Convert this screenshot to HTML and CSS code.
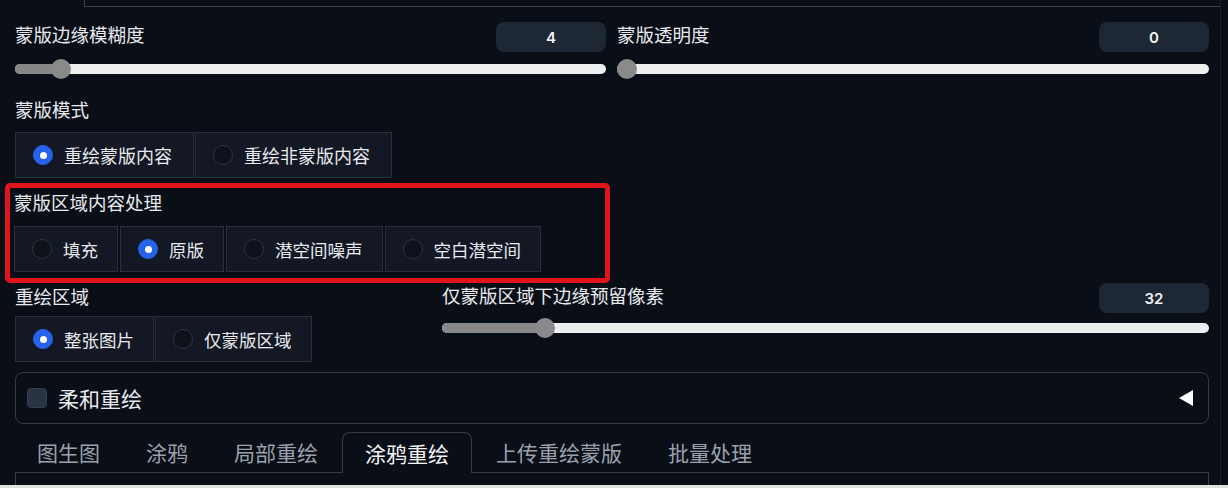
FILE: index.html
```html
<!DOCTYPE html>
<html lang="zh-CN">
<head>
    <meta charset="UTF-8">
    <meta name="viewport" content="width=device-width, initial-scale=1.0">
    <title>涂鸦重绘设置</title>
    <link rel="stylesheet" href="styles.css">
</head>
<body>
    <div class="page">
        <div class="top-box"></div>

        <div class="content">
            <div class="row-sliders">
                <div class="slider-block">
                    <div class="slider-head">
                        <span class="label">蒙版边缘模糊度</span>
                        <div class="num">4</div>
                    </div>
                    <div class="slider" style="--p: 0.0625">
                        <div class="track"></div>
                        <div class="fill"></div>
                        <div class="thumb"></div>
                    </div>
                </div>
                <div class="slider-block">
                    <div class="slider-head">
                        <span class="label">蒙版透明度</span>
                        <div class="num">0</div>
                    </div>
                    <div class="slider" style="--p: 0">
                        <div class="track"></div>
                        <div class="fill"></div>
                        <div class="thumb"></div>
                    </div>
                </div>
            </div>

            <div class="field">
                <div class="label">蒙版模式</div>
                <div class="radio-group">
                    <div class="radio-item"><span class="radio on"></span>重绘蒙版内容</div>
                    <div class="radio-item"><span class="radio"></span>重绘非蒙版内容</div>
                </div>
            </div>

            <div class="highlight">
                <div class="label">蒙版区域内容处理</div>
                <div class="radio-group spaced">
                    <div class="radio-item"><span class="radio"></span>填充</div>
                    <div class="radio-item"><span class="radio on"></span>原版</div>
                    <div class="radio-item"><span class="radio"></span>潜空间噪声</div>
                    <div class="radio-item"><span class="radio"></span>空白潜空间</div>
                </div>
            </div>

            <div class="row-area">
                <div class="area-left">
                    <div class="label">重绘区域</div>
                    <div class="radio-group">
                        <div class="radio-item"><span class="radio on"></span>整张图片</div>
                        <div class="radio-item"><span class="radio"></span>仅蒙版区域</div>
                    </div>
                </div>
                <div class="slider-block">
                    <div class="slider-head">
                        <span class="label">仅蒙版区域下边缘预留像素</span>
                        <div class="num">32</div>
                    </div>
                    <div class="slider tight" style="--p: 0.125">
                        <div class="track"></div>
                        <div class="fill"></div>
                        <div class="thumb"></div>
                    </div>
                </div>
            </div>

            <div class="accordion">
                <span class="checkbox"></span>
                <span class="accordion-title">柔和重绘</span>
                <span class="caret"></span>
            </div>

            <div class="tabs">
                <div class="tab">图生图</div>
                <div class="tab">涂鸦</div>
                <div class="tab">局部重绘</div>
                <div class="tab active">涂鸦重绘</div>
                <div class="tab">上传重绘蒙版</div>
                <div class="tab">批量处理</div>
            </div>
            <div class="tab-panel"></div>
        </div>
    </div>
    <div class="bottom-strip"></div>
</body>
</html>
```

FILE: styles.css
```css
body {
    margin: 0;
    background: #0a0e17;
    font-family: "Noto Sans CJK SC", "Noto Sans", sans-serif;
    color: #e8eaee;
}
.page {
    width: 1220px;
    height: 485px;
    overflow: hidden;
    border-right: 1px dotted #2c3340;
}
.top-box {
    margin-left: 84px;
    height: 6px;
    border-left: 1px solid #3a4250;
    border-bottom: 1px solid #3a4250;
}
.content {
    width: 1194px;
    margin-left: 15px;
}
.label {
    font-size: 18.5px;
    line-height: 24px;
    white-space: nowrap;
}
.row-sliders {
    display: grid;
    grid-template-columns: 591px 592px;
    gap: 11px;
    margin-top: 15px;
}
.slider-head {
    display: flex;
    justify-content: space-between;
    align-items: flex-start;
}
.num {
    width: 110px;
    height: 30px;
    border-radius: 8px;
    background: #1e2734;
    display: flex;
    align-items: center;
    justify-content: center;
    font-family: "Inter", "Liberation Sans", sans-serif;
    font-size: 15px;
    font-weight: 600;
    color: #f3f4f6;
}
.slider {
    position: relative;
    height: 20px;
    margin-top: 7px;
}
.slider.tight {
    margin-top: 5px;
}
.track {
    position: absolute;
    left: 0;
    right: 0;
    top: 5px;
    height: 10px;
    border-radius: 5px;
    background: #eceeef;
}
.fill {
    position: absolute;
    left: 0;
    top: 5px;
    height: 10px;
    border-radius: 5px 0 0 5px;
    width: calc(10px + var(--p) * (100% - 20px));
    background: #878787;
}
.thumb {
    position: absolute;
    top: 0;
    width: 20px;
    height: 20px;
    border-radius: 50%;
    background: #8a8a8a;
    left: calc(var(--p) * (100% - 20px));
}
.field {
    margin-top: 18px;
}
.radio-group {
    display: flex;
    gap: 1px;
    margin-top: 11px;
}
.radio-group.spaced {
    gap: 2px;
    margin-top: 12px;
}
.radio-item {
    display: flex;
    align-items: center;
    gap: 11px;
    height: 46px;
    box-sizing: border-box;
    padding: 0 19px 0 17px;
    border: 1px solid #29303c;
    background: #131824;
    font-size: 17.5px;
    white-space: nowrap;
}
.field .radio-item {
    font-size: 18px;
    padding-right: 21px;
}
.radio {
    width: 20px;
    height: 20px;
    box-sizing: border-box;
    border-radius: 50%;
    border: 1px solid #2e3542;
    background: #0d1119;
    flex-shrink: 0;
}
.radio.on {
    background: #2563eb;
    border-color: #2563eb;
    display: flex;
    align-items: center;
    justify-content: center;
}
.radio.on::after {
    content: "";
    width: 7px;
    height: 7px;
    border-radius: 50%;
    background: #fff;
}
.highlight {
    margin: 5px 0 0 -10px;
    width: 605px;
    box-sizing: border-box;
    border: 5px solid #e1141c;
    border-radius: 5px;
    padding: 2px 0 6px 4px;
}
.row-area {
    display: grid;
    grid-template-columns: 415px 767px;
    gap: 12px;
}
.area-left {
    padding-top: 1px;
}
.area-left .radio-group {
    margin-top: 8px;
}
.accordion {
    margin-top: 10px;
    height: 52px;
    box-sizing: border-box;
    border: 1px solid #343c4a;
    border-radius: 8px;
    display: flex;
    align-items: center;
    padding: 0 15px 0 11px;
}
.checkbox {
    width: 20px;
    height: 20px;
    box-sizing: border-box;
    border-radius: 4px;
    background: #2a3341;
    border: 1px solid #343d4b;
}
.accordion-title {
    margin-left: 11px;
    font-size: 21px;
}
.caret {
    margin-left: auto;
    width: 0;
    height: 0;
    border-top: 8px solid transparent;
    border-bottom: 8px solid transparent;
    border-right: 14px solid #ffffff;
}
.tabs {
    display: flex;
    gap: 2px;
    margin-top: 8px;
    height: 41px;
    position: relative;
    z-index: 1;
}
.tab {
    padding: 0 22px;
    height: 40px;
    box-sizing: border-box;
    display: flex;
    align-items: center;
    font-size: 21px;
    color: #9aa1ad;
    white-space: nowrap;
}
.tab.active {
    height: 41px;
    color: #f3f4f6;
    background: #0a0e17;
    border: 1px solid #343c4a;
    border-bottom: none;
    border-radius: 8px 8px 0 0;
    padding: 0 22px;
}
.tab-panel {
    margin-top: -1px;
    height: 20px;
    border: 1px solid #343c4a;
    border-bottom: none;
}
.bottom-strip {
    height: 3px;
    background: #dde2da;
}
```
